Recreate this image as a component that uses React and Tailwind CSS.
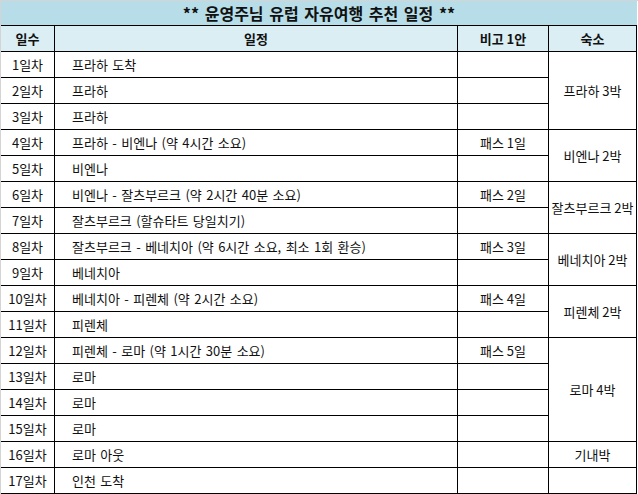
const rows = [
  { day: '1일차', plan: '프라하 도착', note: '' },
  { day: '2일차', plan: '프라하', note: '' },
  { day: '3일차', plan: '프라하', note: '' },
  { day: '4일차', plan: '프라하 - 비엔나 (약 4시간 소요)', note: '패스 1일' },
  { day: '5일차', plan: '비엔나', note: '' },
  { day: '6일차', plan: '비엔나 - 잘츠부르크 (약 2시간 40분 소요)', note: '패스 2일' },
  { day: '7일차', plan: '잘츠부르크 (할슈타트 당일치기)', note: '' },
  { day: '8일차', plan: '잘츠부르크 - 베네치아 (약 6시간 소요, 최소 1회 환승)', note: '패스 3일' },
  { day: '9일차', plan: '베네치아', note: '' },
  { day: '10일차', plan: '베네치아 - 피렌체 (약 2시간 소요)', note: '패스 4일' },
  { day: '11일차', plan: '피렌체', note: '' },
  { day: '12일차', plan: '피렌체 - 로마 (약 1시간 30분 소요)', note: '패스 5일' },
  { day: '13일차', plan: '로마', note: '' },
  { day: '14일차', plan: '로마', note: '' },
  { day: '15일차', plan: '로마', note: '' },
  { day: '16일차', plan: '로마 아웃', note: '' },
  { day: '17일차', plan: '인천 도착', note: '' },
];

// 숙소: 시작 행 index -> [텍스트, rowSpan]
const stays = {
  0: ['프라하 3박', 3],
  3: ['비엔나 2박', 2],
  5: ['잘츠부르크 2박', 2],
  7: ['베네치아 2박', 2],
  9: ['피렌체 2박', 2],
  11: ['로마 4박', 4],
  15: ['기내박', 1],
  16: ['', 1],
};

const cell = 'border-r border-b border-black align-middle p-0';

const App = () => {
  return (
    <div
      className="w-[638px] h-[494px] bg-white border-t border-l border-[#d4d4d4] overflow-hidden text-[#111]"
      style={{ fontFamily: '"Malgun Gothic", "Noto Sans CJK KR", sans-serif' }}
    >
      <table className="table-fixed w-[636px] border-separate border-spacing-0 text-[13px] leading-none">
        <colgroup>
          <col className="w-[54px]" />
          <col className="w-[403px]" />
          <col className="w-[91px]" />
          <col className="w-[88px]" />
        </colgroup>
        <tbody>
          <tr className="h-[25px]">
            <td colSpan={4} className="bg-[#b7dde8] border-b border-black text-center font-bold text-[16px] [word-spacing:2px] p-0">
              ** 윤영주님 유럽 자유여행 추천 일정 **
            </td>
          </tr>
          <tr className="h-[26px] bg-[#daeef3] font-bold">
            <td className={`${cell} text-center`}>일수</td>
            <td className={`${cell} text-center`}>일정</td>
            <td className={`${cell} text-center`}>비고 1안</td>
            <td className={`${cell} text-center`}>숙소</td>
          </tr>
          {rows.map((r, i) => (
            <tr key={r.day} className="h-[26px]">
              <td className={`${cell} text-center whitespace-nowrap`}>{r.day}</td>
              <td className={`${cell} pl-[17px] whitespace-nowrap [word-spacing:1.5px]`}>{r.plan}</td>
              <td className={`${cell} text-center whitespace-nowrap`}>{r.note}</td>
              {stays[i] && (
                <td rowSpan={stays[i][1]} className={`${cell} text-center whitespace-nowrap`}>
                  {stays[i][0]}
                </td>
              )}
            </tr>
          ))}
        </tbody>
      </table>
    </div>
  );
};

export default App;
